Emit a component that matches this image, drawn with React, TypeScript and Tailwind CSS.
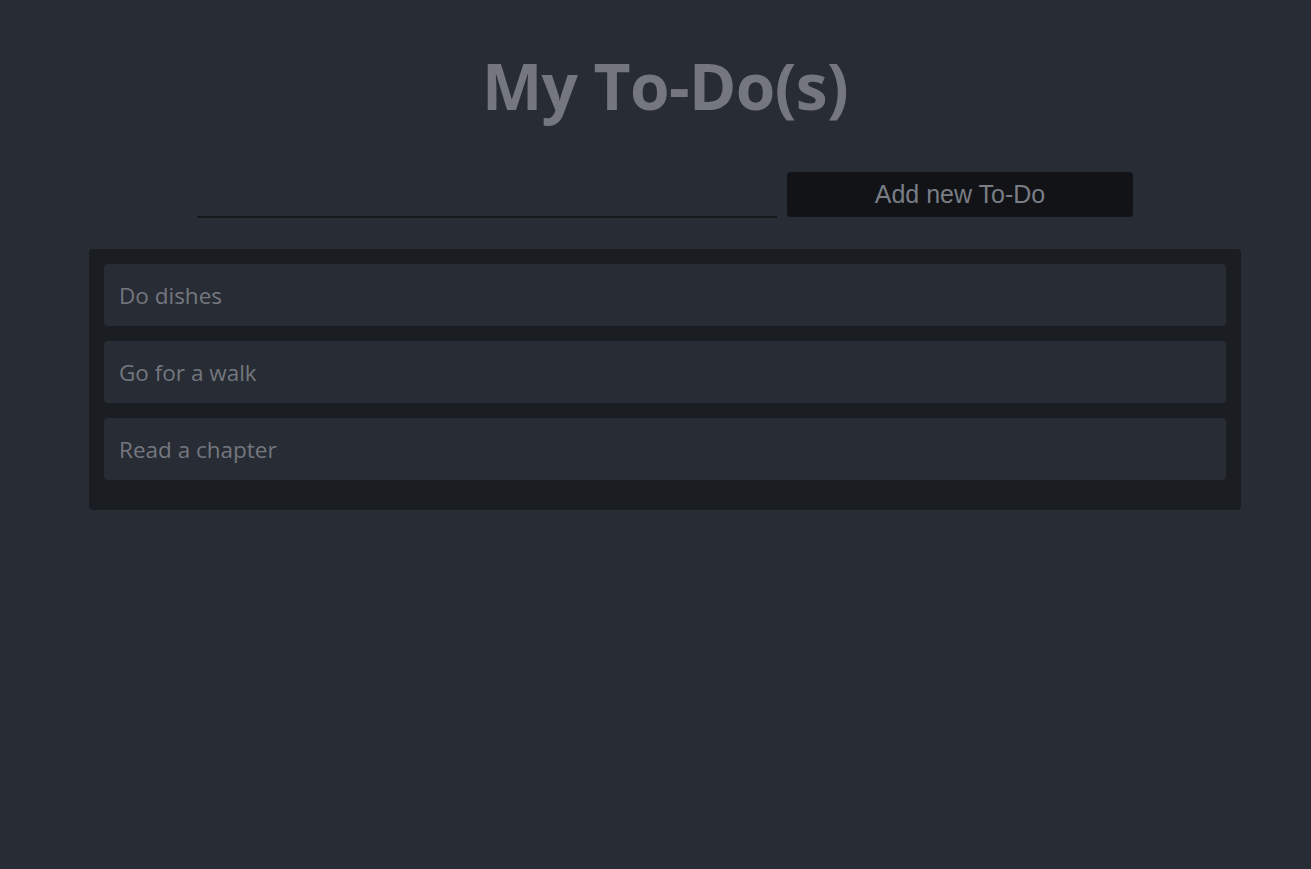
const todos = ["Do dishes", "Go for a walk", "Read a chapter"];

export default function App() {
  return (
    <div className="min-h-screen bg-[#282c34] pl-[19px] font-['Segoe_UI','Open_Sans',sans-serif] text-[#74777f]">
      <div className="flex flex-col items-center">
        <h1 className="mt-[42px] text-[64px] font-bold leading-[88px] tracking-[-0.6px]">My To-Do(s)</h1>
        <div className="mt-[42px] flex items-start gap-[10px]">
          <input
            type="text"
            className="h-[46px] w-[580px] border-b-2 border-[#17191d] bg-transparent px-2 text-xl outline-none"
          />
          <button className="h-[45px] w-[346px] rounded-[4px] bg-[#111316] font-['Liberation_Sans',Arial,sans-serif] text-[25px] text-[#7a7d85]">
            Add new To-Do
          </button>
        </div>
        <ul className="mt-[31px] w-[1152px] rounded-[4px] bg-[#1a1d21] px-[15px] pt-[15px] pb-[15px]">
          {todos.map((t) => (
            <li
              key={t}
              className="mb-[15px] flex h-[62px] items-center rounded-[4px] bg-[#282c34] px-[15px] pt-[2px] text-[22.5px]"
            >
              {t}
            </li>
          ))}
        </ul>
      </div>
    </div>
  );
}
